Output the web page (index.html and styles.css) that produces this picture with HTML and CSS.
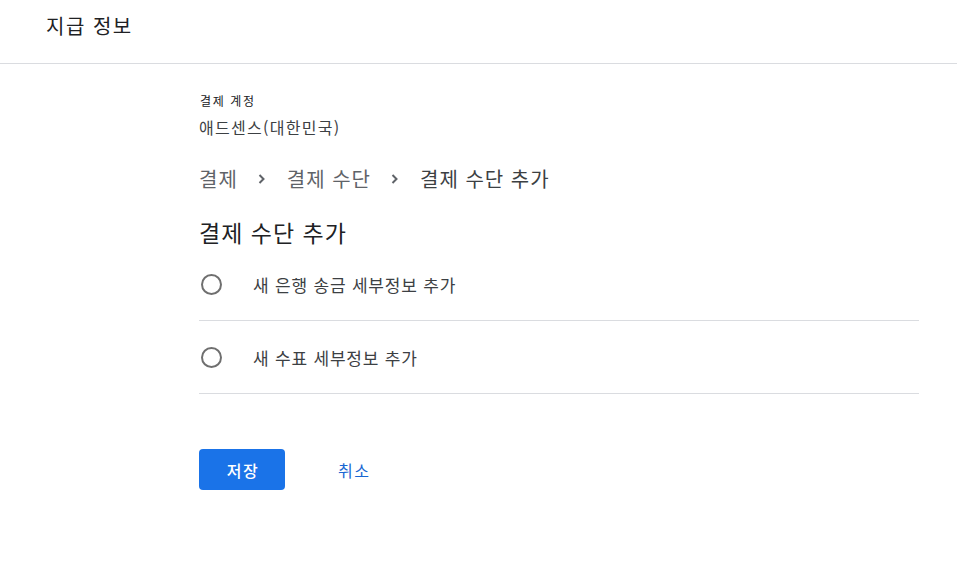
FILE: index.html
```html
<!DOCTYPE html>
<html lang="ko">
<head>
<meta charset="utf-8">
<link rel="stylesheet" href="styles.css">
</head>
<body>
<header class="topbar">
  <h1 class="app-title">지급 정보</h1>
</header>
<main class="content">
  <div class="account">
    <div class="account-label">결제 계정</div>
    <div class="account-name">애드센스(대한민국)</div>
  </div>
  <nav class="crumbs">
    <span class="crumb">결제</span>
    <svg class="chev" viewBox="0 0 8 10" width="8" height="10"><path d="M1.5 1 5.5 5 1.5 9" fill="none" stroke="#5f6368" stroke-width="2"/></svg>
    <span class="crumb">결제 수단</span>
    <svg class="chev" viewBox="0 0 8 10" width="8" height="10"><path d="M1.5 1 5.5 5 1.5 9" fill="none" stroke="#5f6368" stroke-width="2"/></svg>
    <span class="crumb current">결제 수단 추가</span>
  </nav>
  <h2 class="heading">결제 수단 추가</h2>
  <div class="options">
    <label class="option">
      <span class="radio"></span>
      <span class="option-text">새 은행 송금 세부정보 추가</span>
    </label>
    <label class="option">
      <span class="radio"></span>
      <span class="option-text">새 수표 세부정보 추가</span>
    </label>
  </div>
  <div class="actions">
    <button class="btn-primary">저장</button>
    <button class="btn-text">취소</button>
  </div>
</main>
</body>
</html>
```
FILE: styles.css
```css
* { box-sizing: border-box; }
html, body { margin: 0; padding: 0; background: #fff; }
body {
  font-family: "Noto Sans CJK KR", "Noto Sans", Roboto, sans-serif;
  color: #202124;
}
.topbar {
  height: 64px;
  border-bottom: 1px solid #dadce0;
  display: flex;
  align-items: flex-start;
  padding-left: 46px;
}
.app-title {
  margin: 11px 0 0;
  font-size: 20px;
  font-weight: 400;
  letter-spacing: 1.5px;
  line-height: 30px;
  color: #202124;
}
.content {
  padding-left: 199px;
  padding-right: 38px;
}
.account { padding-top: 29px; }
.account-label {
  font-size: 12px;
  letter-spacing: 1.6px;
  line-height: 16px;
  color: #202124;
  margin-left: 1px;
}
.account-name {
  margin-top: 7px;
  font-size: 16px;
  letter-spacing: 1.3px;
  line-height: 22px;
  color: #3c4043;
}
.crumbs {
  margin-top: 26px;
  display: flex;
  align-items: center;
  height: 30px;
  font-size: 20px;
  letter-spacing: 1px;
  color: #5f6368;
}
.crumb { line-height: 30px; }
.crumb.current { color: #3c4043; }
.chev { margin: 0 21px 0 20px; flex: none; }
.heading {
  margin: 23px 0 0;
  font-size: 23px;
  font-weight: 400;
  letter-spacing: 1px;
  line-height: 30px;
  color: #202124;
}
.options { margin-top: 1px; }
.option {
  display: flex;
  align-items: center;
  height: 73px;
  padding-top: 1px;
  border-bottom: 1px solid #dadce0;
}
.radio {
  width: 21px;
  height: 21px;
  border: 2px solid #6f6f6f;
  border-radius: 50%;
  margin-left: 2px;
  flex: none;
}
.option-text {
  margin-left: 31px;
  font-size: 17px;
  letter-spacing: 0.8px;
  color: #3c4043;
}
.actions {
  margin-top: 55px;
  display: flex;
  align-items: center;
  gap: 33px;
}
.btn-primary {
  width: 86px;
  height: 41px;
  border: none;
  border-radius: 4px;
  background: #1a73e8;
  color: #fff;
  font-family: inherit;
  font-size: 16px;
  letter-spacing: 1.5px;
  font-weight: 500;
  padding: 0 0 0 2px;
}
.btn-text {
  border: none;
  background: none;
  padding: 0 20px;
  font-family: inherit;
  font-size: 16px;
  letter-spacing: 1.5px;
  color: #1967d2;
}
```
